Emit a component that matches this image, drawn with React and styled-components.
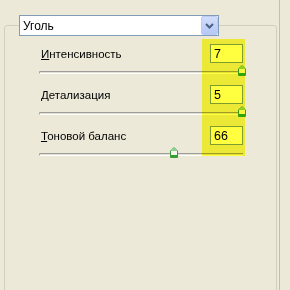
import React from 'react'
import styled, { createGlobalStyle } from 'styled-components'

const GlobalStyle = createGlobalStyle`
  html, body {
    margin: 0;
    padding: 0;
    background: #ece9d8;
  }
  body {
    font-family: 'Liberation Sans', Arial, sans-serif;
    font-size: 11px;
    color: #000;
  }
`

const Panel = styled.div`
  width: 273px;
  height: 290px;
  padding: 0 2px 0 4px;
  border-right: 1px solid #c2bfb0;
  overflow: hidden;
`

const Group = styled.fieldset`
  margin: 15px 0 0;
  padding: 0;
  min-height: 300px;
  border: 1px solid #d0d0bf;
  border-radius: 3px;
`

const Legend = styled.legend`
  margin-left: 14px;
  padding: 0;
`

const Select = styled.div`
  box-sizing: border-box;
  width: 200px;
  height: 21px;
  display: flex;
  align-items: center;
  justify-content: space-between;
  padding: 0 0 0 3px;
  background: #fff;
  border: 1px solid #7f9db9;
  font-size: 12px;
`

const DropButton = styled.div`
  box-sizing: border-box;
  width: 17px;
  height: 19px;
  display: flex;
  align-items: center;
  justify-content: center;
  border: 1px solid #bccdf5;
  border-radius: 2px;
  background: linear-gradient(#d2ddfb, #b5c8f5);
`

const Rows = styled.div`
  position: relative;
  width: 204px;
  margin: 8px 0 0 34px;
`

const Highlight = styled.div`
  position: absolute;
  left: 163px;
  top: -5px;
  width: 43px;
  height: 117px;
  background: #ffff40;
  mix-blend-mode: multiply;
  pointer-events: none;
`

const Row = styled.div`
  margin-bottom: 9px;
`

const Header = styled.div`
  display: flex;
  align-items: center;
  justify-content: space-between;
  height: 19px;
`

const Label = styled.label`
  padding-left: 2px;
  font-size: 11.5px;
`

const NumberBox = styled.div`
  box-sizing: border-box;
  width: 33px;
  height: 19px;
  padding: 1px 3px 0;
  background: #fff;
  border: 1px solid #7f9db9;
  font-size: 12.5px;
  line-height: 16px;
`

const Slider = styled.div`
  position: relative;
  height: 11px;
  margin-top: 2px;
`

const Track = styled.div`
  position: relative;
  top: 6px;
  height: 1px;
  border-top: 1px solid #9d9c98;
  border-left: 1px solid #9d9c98;
  border-bottom: 1px solid #fff;
  border-radius: 2px 0 0 2px;
  background: #e3e1d4;
`

const Thumb = styled.svg`
  position: absolute;
  top: 0;
`

const Chevron = () => (
  <svg width="9" height="6" viewBox="0 0 9 6">
    <path d="M1 1 L4.5 4.5 L8 1" fill="none" stroke="#4d6185" strokeWidth="2" />
  </svg>
)

const SliderThumb = ({ pos }) => (
  <Thumb width="8" height="11" viewBox="0 0 8 11" style={{ left: `${pos * 200 - 1.5}px` }}>
    <path d="M0.5 10.5 V4 L4 0.5 L7.5 4 V10.5 Z" fill="#f7f7f2" stroke="#3d9b3d" />
    <path d="M1.5 4 L4 1.5 L6.5 4 Z" fill="#7fd27f" />
    <rect x="1" y="8" width="6" height="2" fill="#2aa52a" />
  </Thumb>
)

const params = [
  { first: 'И', rest: 'нтенсивность', value: 7, max: 7 },
  { first: 'Д', rest: 'етализация', value: 5, max: 5 },
  { first: 'Т', rest: 'оновой баланс', value: 66, max: 100 },
]

export default function App() {
  return (
    <>
      <GlobalStyle />
      <Panel>
        <Group>
          <Legend>
            <Select>
              <span>Уголь</span>
              <DropButton>
                <Chevron />
              </DropButton>
            </Select>
          </Legend>
          <Rows>
            {params.map((p) => (
              <Row key={p.rest}>
                <Header>
                  <Label>
                    <u>{p.first}</u>
                    {p.rest}
                  </Label>
                  <NumberBox>{p.value}</NumberBox>
                </Header>
                <Slider>
                  <Track />
                  <SliderThumb pos={p.value / p.max} />
                </Slider>
              </Row>
            ))}
            <Highlight />
          </Rows>
        </Group>
      </Panel>
    </>
  )
}
